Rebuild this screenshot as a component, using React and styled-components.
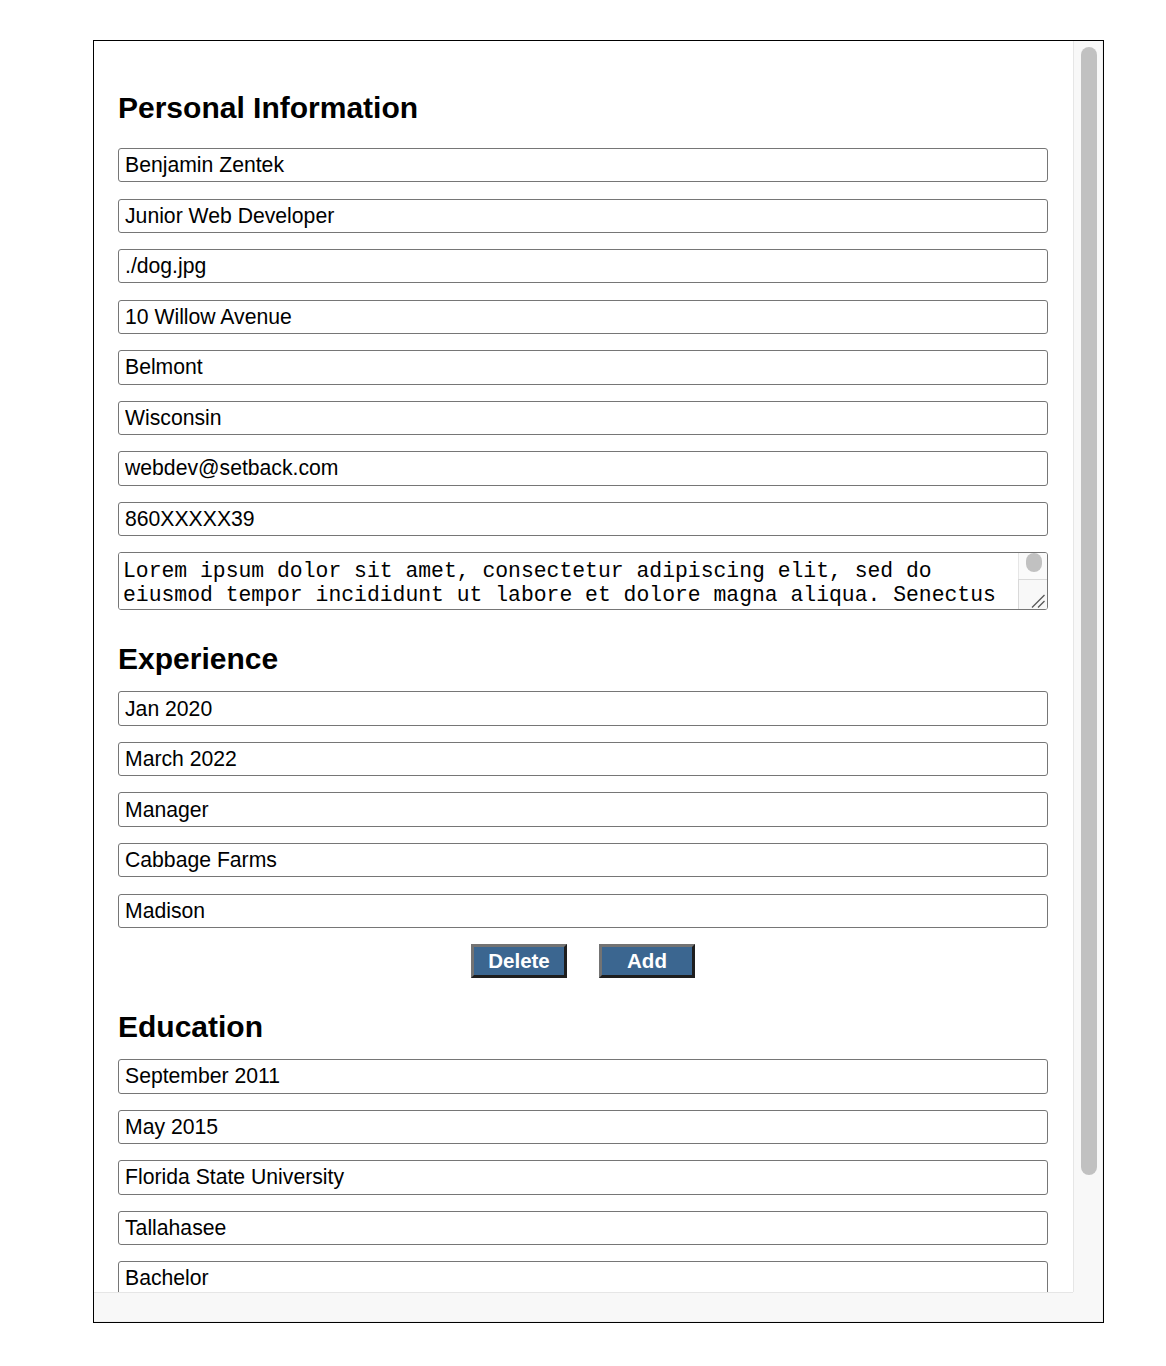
import React from "react";
import styled, { createGlobalStyle } from "styled-components";

const GlobalStyle = createGlobalStyle`
  html, body { margin: 0; padding: 0; background: #ffffff; }
  body { font-family: "Liberation Sans", Arial, sans-serif; color: #000; }
`;

const Frame = styled.div`
  box-sizing: border-box;
  width: 1011px;
  height: 1283px;
  margin: 40px 0 0 93px;
  border: 1px solid #000;
  display: grid;
  grid-template-columns: 979px 30px;
  grid-template-rows: 1251px 30px;
  background: #fff;
`;

const Viewport = styled.div`
  min-height: 0;
  overflow: hidden;
  padding: 25px 25px 0 24px;
`;

const VTrack = styled.div`
  box-sizing: border-box;
  background: #f8f8f8;
  border-left: 1px solid #e6e6e6;
  border-right: 1px solid #efefef;
  padding: 6px 0 0 7px;
`;

const VThumb = styled.div`
  width: 16px;
  height: 1128px;
  border-radius: 8px;
  background: #c1c1c1;
`;

const HTrack = styled.div`
  box-sizing: border-box;
  background: #f8f8f8;
  border-top: 1px solid #e6e6e6;
  border-bottom: 1px solid #efefef;
`;

const Corner = styled.div`
  box-sizing: border-box;
  background: #f8f8f8;
  border-right: 1px solid #efefef;
  border-bottom: 1px solid #efefef;
`;

const Section = styled.section`
  display: block;
`;

const Heading = styled.h2`
  margin: ${(p) => (p.$first ? "25px 0 23px" : "32px 0 15px")};
  font-size: 30px;
  font-weight: 700;
  line-height: 34px;
`;

const Fields = styled.div`
  display: flex;
  flex-direction: column;
  gap: 16.17px;
`;

const Field = styled.input`
  box-sizing: border-box;
  display: block;
  width: 100%;
  height: 34.4px;
  margin: 0;
  padding: 0 6px;
  border: 1px solid #767676;
  border-radius: 3px;
  background: #fff;
  color: #000;
  font-family: "Liberation Sans", Arial, sans-serif;
  font-size: 21.2px;
  outline: none;
`;

const BioBox = styled.div`
  box-sizing: border-box;
  height: 58px;
  display: grid;
  grid-template-columns: 1fr 29px;
  border: 1px solid #767676;
  border-radius: 3px;
  overflow: hidden;
  background: #fff;
`;

const Bio = styled.textarea`
  box-sizing: border-box;
  display: block;
  width: 100%;
  height: 100%;
  margin: 0;
  padding: 6px 4px 2px;
  border: 0;
  background: #fff;
  color: #000;
  font-family: "Liberation Mono", "Courier New", monospace;
  font-size: 21.4px;
  line-height: 24px;
  resize: none;
  overflow: hidden;
  outline: none;
`;

const BioScroll = styled.div`
  display: flex;
  flex-direction: column;
  background: #fafafa;
  border-left: 1px solid #e6e6e6;
`;

const BioThumb = styled.div`
  width: 16px;
  height: 19px;
  margin: 0 0 0 7px;
  border-radius: 8px;
  background: #c1c1c1;
`;

const Resizer = styled.div`
  box-sizing: border-box;
  margin: auto 0 0 -1px;
  height: 30px;
  border-top: 1px solid #d9d9d9;
  border-left: 1px solid #d9d9d9;
  background: #f8f8f8;
  display: flex;
  align-items: flex-end;
  justify-content: flex-end;
`;

const Actions = styled.div`
  display: flex;
  justify-content: center;
  gap: 32px;
`;

const ActionButton = styled.button`
  box-sizing: border-box;
  width: 96px;
  height: 34px;
  margin: 0;
  padding: 0;
  border: 3px solid;
  border-color: #737373 #1e1e1e #1e1e1e #737373;
  background: #3b6690;
  color: #ffffff;
  font-family: "Liberation Sans", Arial, sans-serif;
  font-size: 20.5px;
  font-weight: 700;
  line-height: 1;
  cursor: pointer;
`;

const personal = [
  "Benjamin Zentek",
  "Junior Web Developer",
  "./dog.jpg",
  "10 Willow Avenue",
  "Belmont",
  "Wisconsin",
  "webdev@setback.com",
  "860XXXXX39",
];

const bio =
  "Lorem ipsum dolor sit amet, consectetur adipiscing elit, sed do eiusmod tempor incididunt ut labore et dolore magna aliqua. Senectus et netus et malesuada fames ac turpis egestas.";

const experience = ["Jan 2020", "March 2022", "Manager", "Cabbage Farms", "Madison"];

const education = [
  "September 2011",
  "May 2015",
  "Florida State University",
  "Tallahasee",
  "Bachelor",
];

function ResizeGrip() {
  return (
    <svg width="28" height="28" viewBox="0 0 28 28" aria-hidden="true">
      <line x1="13" y1="26.5" x2="25.5" y2="14" stroke="#555" strokeWidth="1.2" />
      <line x1="19" y1="26.5" x2="25.5" y2="20" stroke="#555" strokeWidth="1.2" />
    </svg>
  );
}

export default function App() {
  return (
    <>
      <GlobalStyle />
      <Frame>
        <Viewport>
          <Section>
            <Heading $first>Personal Information</Heading>
            <Fields>
              {personal.map((v) => (
                <Field key={v} type="text" defaultValue={v} />
              ))}
              <BioBox>
                <Bio defaultValue={bio} />
                <BioScroll>
                  <BioThumb />
                  <Resizer>
                    <ResizeGrip />
                  </Resizer>
                </BioScroll>
              </BioBox>
            </Fields>
          </Section>
          <Section>
            <Heading>Experience</Heading>
            <Fields>
              {experience.map((v) => (
                <Field key={v} type="text" defaultValue={v} />
              ))}
              <Actions>
                <ActionButton type="button">Delete</ActionButton>
                <ActionButton type="button">Add</ActionButton>
              </Actions>
            </Fields>
          </Section>
          <Section>
            <Heading>Education</Heading>
            <Fields>
              {education.map((v) => (
                <Field key={v} type="text" defaultValue={v} />
              ))}
            </Fields>
          </Section>
        </Viewport>
        <VTrack>
          <VThumb />
        </VTrack>
        <HTrack />
        <Corner />
      </Frame>
    </>
  );
}
